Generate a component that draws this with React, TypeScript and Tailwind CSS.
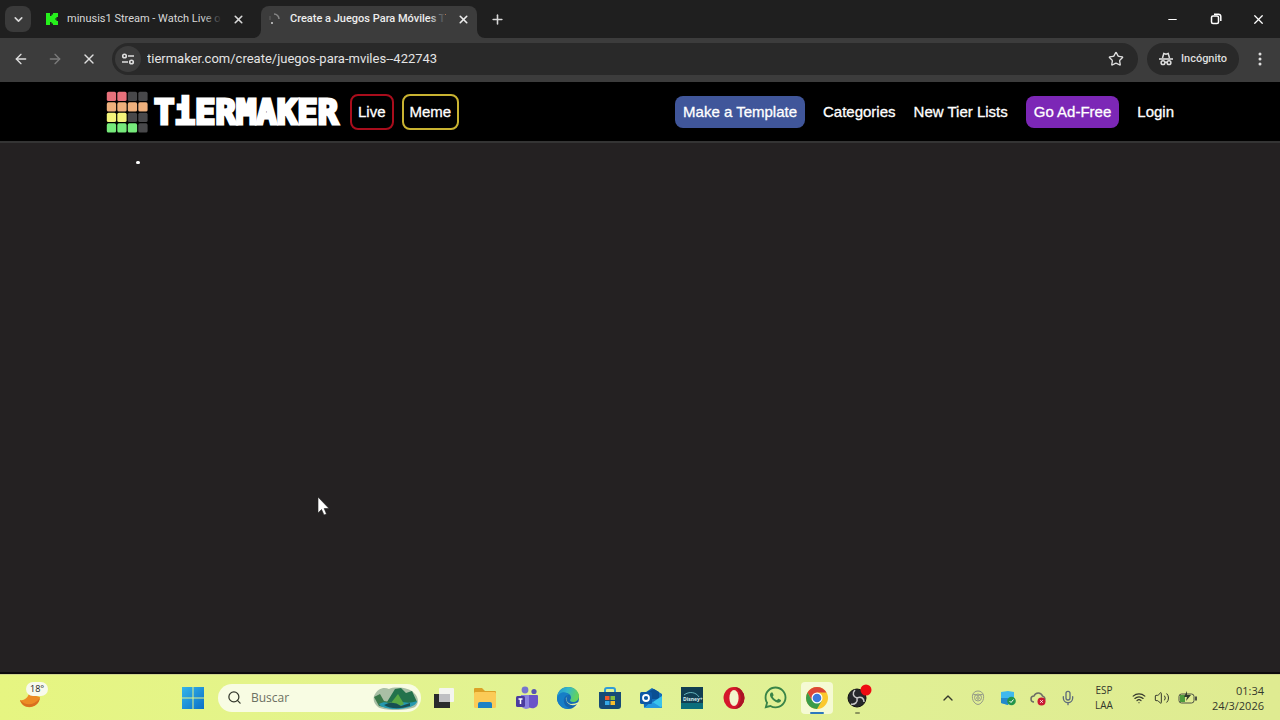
import type { ReactNode } from 'react';
import { ArrowLeft, ArrowRight, ChevronDown, ChevronUp, Mic, Minus, Plus, Search, Star, Volume2, Wifi, X } from 'lucide-react';
import { FaWhatsapp } from 'react-icons/fa';

const LOGO_ROWS = [
  ['#e8717b', '#e8717b', '#48484a', '#48484a'],
  ['#eeb07c', '#eeb07c', '#eeb07c', '#eeb07c'],
  ['#f3f37a', '#f3f37a', '#48484a', '#48484a'],
  ['#76ea7b', '#76ea7b', '#76ea7b', '#48484a']
];

function TabStrip() {
  return (
    <div className="flex h-[38px] items-stretch bg-[#1f1f1f] pl-[5px] text-[11px] text-[#d8d8d8]">
      <button
        aria-label="Search tabs"
        className="mt-[6px] flex h-[26px] w-[26px] items-center justify-center rounded-lg bg-[#3a3a3a]"
      >
        <ChevronDown size={13} strokeWidth={3} />
      </button>
      <div className="ml-2 flex w-[214px] items-center px-[5px]">
        <svg viewBox="0 0 16 16" className="h-4 w-4 shrink-0">
          <path fill="#26f01c" d="M2 2h4v3h1.500V3.500H9V2h5v4h-1.500v1.500H11v1h1.500V10H14v4H9v-1.500H7.500V11H6v3H2z" />
        </svg>
        <span className="relative ml-[7px] w-[155px] whitespace-nowrap">
          minusis1 Stream - Watch Live o
          <span className="absolute inset-y-0 right-0 w-5 bg-linear-to-r from-transparent to-[#1f1f1f]" />
        </span>
        <button aria-label="Close minusis1 Stream" className="ml-auto flex h-5 w-5 items-center justify-center">
          <X size={13} strokeWidth={3} />
        </button>
      </div>
      <div className="flex items-end">
        <svg viewBox="0 0 8 8" className="h-2 w-2">
          <path fill="#3c3c3c" d="M8 0v8H0a8 8 0 0 0 8-8z" />
        </svg>
      </div>
      <div className="mt-[6px] flex w-[216px] items-center rounded-t-lg bg-[#3c3c3c] pr-1 pb-[6px] pl-[6px] font-medium text-[#ededed]">
        <svg viewBox="0 0 16 16" className="h-4 w-4 shrink-0" fill="none">
          <path d="M7 3a5 5 0 0 1 5 5" stroke="#858585" strokeWidth="1.5" />
          <circle cx="5" cy="12" r="1" fill="#d0d0d0" />
          <path d="M3 9V5" stroke="#606060" />
        </svg>
        <span className="relative ml-[7px] w-[155px] whitespace-nowrap">
          Create a Juegos Para Móviles T
          <span className="absolute inset-y-0 right-0 w-4 bg-linear-to-r from-transparent to-[#3c3c3c]" />
        </span>
        <button aria-label="Close Create a Juegos" className="ml-auto flex h-5 w-5 items-center justify-center">
          <X size={13} strokeWidth={3} />
        </button>
      </div>
      <div className="flex items-end">
        <svg viewBox="0 0 8 8" className="h-2 w-2">
          <path fill="#3c3c3c" d="M0 0v8h8a8 8 0 0 1-8-8z" />
        </svg>
      </div>
      <button aria-label="New tab" className="flex w-6 items-center justify-center">
        <Plus size={15} strokeWidth={2.5} />
      </button>
      <div className="ml-auto flex text-white">
        <button aria-label="Minimize" className="flex w-[43px] items-center justify-center">
          <Minus size={13} />
        </button>
        <button aria-label="Restore" className="flex w-[43px] items-center justify-center">
          <svg viewBox="0 0 12 12" className="h-3 w-3" fill="none" stroke="currentColor" strokeWidth="1.5">
            <rect x="1.5" y="3" width="7" height="7.5" rx="1.5" />
            <path d="M4 1.2h4.5a2.3 2.3 0 0 1 2.3 2.3V8" />
          </svg>
        </button>
        <button aria-label="Close window" className="flex w-[43px] items-center justify-center">
          <X size={15} />
        </button>
      </div>
    </div>
  );
}

function Toolbar() {
  return (
    <div className="flex h-11 items-center bg-[#3c3c3c] pr-2 pb-[2px] text-[#dedede]">
      <button aria-label="Back" className="ml-3 flex w-[18px] justify-center">
        <ArrowLeft size={16} />
      </button>
      <button aria-label="Forward" className="ml-4 flex w-[18px] justify-center text-[#7b7b7b]">
        <ArrowRight size={16} />
      </button>
      <button aria-label="Stop" className="ml-4 flex w-[18px] justify-center">
        <X size={16} />
      </button>
      <div className="ml-[14px] flex h-8 flex-1 items-center rounded-full bg-[#292929] pr-[14px] pl-[3px]">
        <button aria-label="Site information" className="flex h-[26px] w-[26px] items-center justify-center rounded-full bg-[#3c3c3c]">
          <svg viewBox="0 0 14 14" className="h-[14px] w-[14px]" fill="none" stroke="currentColor" strokeWidth="1.6">
            <circle cx="3.5" cy="4" r="1.8" />
            <path d="M7 4h6M1 10h6" />
            <circle cx="10.5" cy="10" r="1.8" />
          </svg>
        </button>
        <input
          aria-label="Address"
          readOnly
          value="tiermaker.com/create/juegos-para-mviles--422743"
          className="ml-[6px] min-w-0 flex-1 bg-transparent text-[13px] text-[#e4e4e4] outline-none"
        />
        <button aria-label="Bookmark">
          <Star size={16} />
        </button>
      </div>
      <button className="ml-[9px] flex h-8 w-[92px] items-center justify-center gap-2 rounded-full bg-[#292929] text-[11px] font-medium">
        <svg viewBox="0 0 14 14" className="h-[14px] w-[14px]" fill="none" stroke="currentColor" strokeWidth="1.5">
          <path d="M3.5 6L4.8 1.5 7 2.3l2.2-.8L10.5 6" />
          <path d="M0 7h14" strokeWidth="1.6" />
          <circle cx="4" cy="10.7" r="1.9" />
          <circle cx="10" cy="10.7" r="1.9" />
          <path d="M6 10.3h2" />
        </svg>
        Incógnito
      </button>
      <button aria-label="Menu" className="ml-[9px] flex w-6 justify-center">
        <svg viewBox="0 0 4 16" className="h-4 w-1" fill="currentColor">
          <circle cx="2" cy="3" r="1.5" />
          <circle cx="2" cy="8" r="1.5" />
          <circle cx="2" cy="13" r="1.5" />
        </svg>
      </button>
    </div>
  );
}

function SiteHeader() {
  return (
    <header className="border-b-2 border-[#343434] bg-black font-['Liberation_Sans',Arial,sans-serif] text-[15px] text-white">
      <div className="mx-auto flex h-[59px] w-full max-w-[1068px] items-center">
        <a href="#home" className="flex items-center">
          <svg viewBox="0 0 42 42" className="h-[42px] w-[42px]">
            {LOGO_ROWS.map((row, y) =>
              row.map((color, x) => (
                <rect key={`${x}-${y}`} x={x * 10.5 + 0.8} y={y * 10.5 + 0.8} width="9.3" height="9.3" rx="1.6" fill={color} />
              ))
            )}
          </svg>
          <span className="ml-[6px] w-[188px] text-[34px] leading-[42px] font-bold whitespace-nowrap font-['DejaVu_Sans_Mono',monospace] [-webkit-text-stroke:3px_white]">
            TiERMAKER
          </span>
        </a>
        <a href="#live" className="ml-2 rounded-lg border-2 border-[#a90d1c] px-[6px] py-[6px] leading-5 [-webkit-text-stroke:0.3px_white]">
          Live
        </a>
        <a href="#meme" className="ml-2 rounded-lg border-2 border-[#c9b331] px-[6px] py-[6px] leading-5 [-webkit-text-stroke:0.3px_white]">
          Meme
        </a>
        <nav className="ml-auto flex items-center gap-[18px] leading-4 [-webkit-text-stroke:0.3px_white]">
          <a href="#create" className="rounded-lg bg-[#40569a] px-2 py-2">Make a Template</a>
          <a href="#categories">Categories</a>
          <a href="#new">New Tier Lists</a>
          <a href="#adfree" className="rounded-lg bg-[#7c27b6] px-2 py-2">Go Ad-Free</a>
          <a href="#login">Login</a>
        </nav>
      </div>
    </header>
  );
}

const Icon = ({ children }: { children: ReactNode }) => (
  <svg viewBox="0 0 24 24" className="h-6 w-6">
    {children}
  </svg>
);

const APPS: { name: string; icon: ReactNode }[] = [
  {
    name: 'Task view',
    icon: (
      <Icon>
        <rect x="2" y="8" width="16" height="14" fill="#292b2c" />
        <rect x="7" y="2" width="15" height="14" rx="1" fill="#f4f5f0" />
        <path d="M7 8h11v8H7z" fill="#bfc0c3" />
      </Icon>
    )
  },
  {
    name: 'File Explorer',
    icon: (
      <Icon>
        <path d="M1 3q0-1 1-1h7l3 3h10q1 0 1 1v6H1z" fill="#dca127" />
        <rect x="1" y="6" width="22" height="16" rx="1.5" fill="#fbcb57" />
        <path d="M5 22v-4q0-2 2-2h10q2 0 2 2v4z" fill="#1b82c6" />
      </Icon>
    )
  },
  {
    name: 'Teams',
    icon: (
      <Icon>
        <circle cx="10" cy="4" r="3.4" fill="#7775cf" />
        <circle cx="19" cy="5.5" r="2.6" fill="#5755b0" />
        <path d="M6 9h11v9a6 6 0 0 1-11 2z" fill="#8b83df" />
        <path d="M14 9h8q1 0 1 1v7a5.5 5.5 0 0 1-9 4z" fill="#6a55c8" />
        <rect x="1" y="10" width="9" height="11" rx="1.5" fill="#4b3b9f" />
        <path d="M3.500 13h4M5.500 13v5" stroke="#fff" strokeWidth="1.5" />
      </Icon>
    )
  },
  {
    name: 'Edge',
    icon: (
      <Icon>
        <defs>
          <linearGradient id="edge" x1="0" y1="0" x2="1" y2="0.3">
            <stop offset="0" stopColor="#1c93d3" />
            <stop offset="0.5" stopColor="#35b8c8" />
            <stop offset="1" stopColor="#64d35a" />
          </linearGradient>
        </defs>
        <circle cx="12" cy="12" r="11" fill="#126ab5" />
        <path d="M1 13C1 5 6 1 12 1c7 0 11 5 11 9 0 4-3 6-6 6-2 0-3-1-3-2 1-1 1-2 1-3C14 5 3 6 1 13z" fill="url(#edge)" />
        <path d="M1 12c2-7 10-7 12-3-4-1-7 5-4 9 2 3 5 4 7 4C8 25 1 19 1 12z" fill="#167ec6" />
        <path d="M12 9c-3 3-2 8 3 9 3 0 5-1 8-2l1 5-4 1C13 21 8 17 10 12z" fill="#e6f4a6" />
        <path d="M10 12c0 6 6 9 11 6-3 5-9 5-12 1-1-2-1-5 1-7z" fill="#1464ae" />
      </Icon>
    )
  },
  {
    name: 'Microsoft Store',
    icon: (
      <Icon>
        <path d="M7 7V4q0-2 2-2h6q2 0 2 2v3" fill="none" stroke="#2f9bd8" strokeWidth="2" />
        <path d="M1 6h22v14q0 3-3 3H4q-3 0-3-3z" fill="#164b76" />
        <path fill="#f1592b" d="M7 10h4.500v4H7z" />
        <path fill="#83bd3e" d="M12.500 10H17v4h-4.500z" />
        <path fill="#36a9e7" d="M7 15h4.500v4H7z" />
        <path fill="#f9bd2d" d="M12.500 15H17v4h-4.500z" />
      </Icon>
    )
  },
  {
    name: 'Outlook',
    icon: (
      <Icon>
        <path d="M4 8l9-6 10 6v13q0 1-1 1H6q-1 0-1-1z" fill="#126cba" />
        <path d="M8 6l7-3 5 3v7H8z" fill="#0a4f93" />
        <path d="M5 22l18-12v10q0 2-2 2z" fill="#39c3ed" />
        <path d="M12 15l11 7H6z" fill="#2499df" />
        <rect x="1" y="6" width="12" height="12" rx="1.5" fill="#0d59a5" />
        <circle cx="7" cy="12" r="3" fill="none" stroke="#fff" strokeWidth="1.8" />
      </Icon>
    )
  },
  {
    name: 'Disney+',
    icon: (
      <Icon>
        <rect x="1" y="1" width="22" height="22" fill="#113e52" />
        <path d="M1 17h22v6H1z" fill="#0b6e7b" />
        <path d="M4 9c5-4 12-3 15 2" fill="none" stroke="#67b7bf" />
        <text x="3" y="15" fontSize="5" fontWeight="bold" fill="#d9eef0">Disney+</text>
      </Icon>
    )
  },
  {
    name: 'Opera',
    icon: (
      <Icon>
        <ellipse cx="12" cy="12" rx="10.5" ry="11" fill="#d5162b" />
        <path d="M12 1a10.500 11 0 0 1 0 22c9-4 9-18 0-22z" fill="#aa1425" />
        <ellipse cx="12" cy="12" rx="4.600" ry="8" fill="#f2f5ce" />
      </Icon>
    )
  },
  { name: 'WhatsApp', icon: <FaWhatsapp size={25} color="#398448" /> },
  {
    name: 'Chrome',
    icon: (
      <Icon>
        <circle cx="12" cy="12" r="11" fill="#fbc82d" />
        <path d="M2.500 6.500A11 11 0 0 1 21.500 6.500H12L7.200 14.800z" fill="#dc4638" />
        <path d="M2.500 6.500A11 11 0 0 0 12 23l4.800-8.200H7.200z" fill="#3a9b4b" />
        <circle cx="12" cy="12" r="5.500" fill="#fff" />
        <circle cx="12" cy="12" r="4.300" fill="#3c79dc" />
      </Icon>
    )
  },
  {
    name: 'OBS Studio',
    icon: (
      <svg viewBox="0 0 28 28" className="h-7 w-7 shrink-0">
        <circle cx="13" cy="14" r="9" fill="#26282b" stroke="#111" />
        <path d="M13 14c-4-1-5-5-2-8M13 14c4-2 7 0 7 4M13 14c1 4-2 7-6 6" fill="none" stroke="#c8c8c8" strokeWidth="1.500" />
        <circle cx="22" cy="6" r="5.500" fill="#ef0b12" />
      </svg>
    )
  }
];

function Taskbar() {
  return (
    <footer className="flex h-[46px] items-center border-t border-[#cfd58b] bg-linear-to-r from-[#e6f581] via-[#e1f296] to-[#dfeb91] font-['Open_Sans','Noto_Sans',sans-serif] text-[#34382c]">
      <button aria-label="Weather" className="ml-[18px] w-8">
        <svg viewBox="0 0 32 32" className="h-8 w-8">
          <path d="M2 18q6 1 9-6l11 3c-1 12-17 14-20 3z" fill="#ec8b25" />
          <path d="M2 18c5 6 14 6 20-2-2 11-17 12-20 2z" fill="#d8701f" />
          <rect x="8" y="0" width="22" height="14" rx="7" fill="#f8faee" />
          <text x="12" y="10" fontSize="9" fill="#222">18°</text>
        </svg>
      </button>
      <button aria-label="Start" className="ml-[132px]">
        <svg viewBox="0 0 22 22" className="h-[22px] w-[22px]">
          <defs>
            <linearGradient id="win" x1="0" y1="0" x2="1" y2="1">
              <stop offset="0" stopColor="#35b5ea" />
              <stop offset="1" stopColor="#0b70c7" />
            </linearGradient>
          </defs>
          <path fill="url(#win)" d="M0 0h10.500v10.500H0zM11.500 0H22v10.500H11.500zM0 11.500h10.500V22H0zM11.500 11.500H22V22H11.500z" />
        </svg>
      </button>
      <label className="ml-[14px] flex h-7 w-[203px] items-center rounded-full bg-[#f8fce3] pr-[2px] pl-[9px]">
        <Search size={15} />
        <input
          aria-label="Buscar"
          placeholder="Buscar"
          className="ml-[9px] min-w-0 flex-1 bg-transparent text-[12px] outline-none placeholder:text-[#6c7062]"
        />
        <svg viewBox="0 0 46 24" className="h-6 w-[46px]">
          <path d="M1 10C5 1 12 1 16 3c6-3 22-1 25 4 5 4 5 11 1 14-8 4-32 4-37 0-4-3-5-7-4-11z" fill="#a9bfa5" />
          <path d="M14 16L22 3l6-1 5 5 6-2 5 11-12 4z" fill="#23724c" />
          <path d="M1 11l6-3 4 7 6 1-1 6-10-2z" fill="#397849" />
          <path d="M6 18c8-5 10 2 16-1s12 2 22-2c0 9-34 11-38 3z" fill="#2599b0" />
          <path d="M18 17l7-9 6 10-6 3z" fill="#59a844" />
          <path d="M11 19q9-5 17 1l9-3v3q-16 5-26-1z" fill="#174f53" />
        </svg>
      </label>
      <div className="ml-[7px] flex w-[446px] items-center justify-between">
        {APPS.map(({ name, icon }) => (
          <button
            key={name}
            aria-label={name}
            className={
              name === 'Chrome'
                ? 'relative flex h-8 w-8 items-center justify-center rounded bg-[#f5fad4]'
                : 'relative flex h-8 w-8 items-center justify-center'
            }
          >
            {icon}
            {name === 'Chrome' && <span className="absolute bottom-0 h-[2px] w-[14px] rounded bg-[#2c78bd]" />}
            {name === 'OBS Studio' && <span className="absolute bottom-0 h-[2px] w-[5px] rounded bg-[#8b955d]" />}
          </button>
        ))}
      </div>
      <div className="ml-auto flex items-center pr-4">
        <div className="flex items-center gap-[14px]">
          <ChevronUp size={16} />
          <svg viewBox="0 0 16 16" className="h-4 w-4" fill="none" stroke="#959b88">
            <path d="M4 12C1 8 2 1 8 1s7 7 4 11M3 4q5 3 10 0" />
            <circle cx="8" cy="7.500" r="3.500" />
            <circle cx="8" cy="8" r="1.300" />
            <path d="M4 12q4 5 8 0" />
          </svg>
          <svg viewBox="0 0 16 16" className="h-4 w-4">
            <path d="M1 2l7-1 6 1v7l-6 6-7-2z" fill="#3fb9ee" />
            <path d="M1 8h7v7l-7-2z" fill="#2489cc" />
            <circle cx="11.500" cy="11" r="4.300" fill="#23954a" />
            <path d="M9.500 11l1.500 1.500 2.500-3" fill="none" stroke="#fff" />
          </svg>
          <svg viewBox="0 0 16 16" className="h-4 w-4">
            <path d="M4 12a3 3 0 0 1 0-6 4.500 4.500 0 0 1 8.500 0A3 3 0 0 1 14 11" fill="none" stroke="#6c6e66" strokeWidth="1.500" />
            <circle cx="11.500" cy="11.500" r="4" fill="#c91932" />
            <path d="M10.300 10.300l2.400 2.400M12.700 10.300l-2.400 2.400" stroke="#fff" />
          </svg>
          <Mic size={16} className="text-[#606d7b]" strokeWidth={2} />
        </div>
        <div className="ml-4 w-6 text-center text-[10px] leading-[15px]">
          <div>ESP</div>
          <div>LAA</div>
        </div>
        <div className="ml-4 flex items-center gap-2">
          <Wifi size={14} />
          <Volume2 size={16} strokeWidth={1.5} />
          <svg viewBox="0 0 20 14" className="h-[14px] w-5" fill="none" stroke="#4c5144">
            <rect x="1" y="3" width="15" height="9" rx="2.500" />
            <path d="M18 5.500v4" strokeWidth="2" />
            <path d="M2 4h5v7H2z" fill="#4d9c3c" stroke="none" />
            <path d="M9 0L6 6h3l-1 4 5-6H9z" fill="#313c2c" stroke="none" />
          </svg>
        </div>
        <div className="ml-3 w-[54px] text-right text-[11px] leading-[15px] whitespace-nowrap">
          <div>01:34</div>
          <div>24/3/2026</div>
        </div>
      </div>
    </footer>
  );
}

export default function App() {
  return (
    <div className="relative flex min-h-screen flex-col bg-[#242122] font-[Roboto,'Open_Sans',sans-serif]">
      <TabStrip />
      <Toolbar />
      <SiteHeader />
      <main className="flex-1 border-b-2 border-[#0c0a0c] bg-[#242122]">
        <div className="mx-auto w-full max-w-[1068px] pt-[18px] pl-[30px]">
          <div className="h-[3px] w-1 rounded-full bg-white" />
        </div>
      </main>
      <Taskbar />
      <svg viewBox="0 0 12 20" className="pointer-events-none absolute top-[496px] left-[317px] h-5 w-3">
        <path d="M1 1v16l3.500-3.500L7 19l2.500-1-2.300-5.500H12z" fill="#fff" stroke="#222" strokeWidth="0.600" />
      </svg>
    </div>
  );
}
